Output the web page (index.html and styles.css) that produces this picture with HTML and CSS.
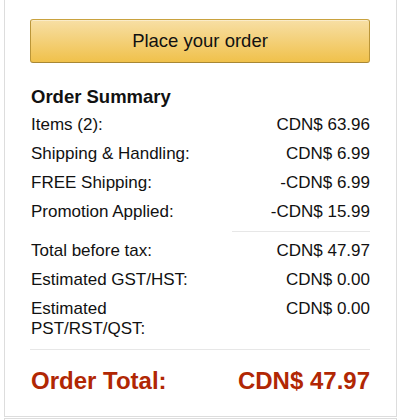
FILE: index.html
```html
<!DOCTYPE html>
<html>
<head>
<meta charset="utf-8">
<link rel="stylesheet" href="styles.css">
</head>
<body>
<div class="group">
  <div class="card">
    <button class="place-btn">Place your order</button>
    <h3 class="summary-title">Order Summary</h3>
    <div class="rows">
      <div class="label">Items (2):</div><div class="value">CDN$ 63.96</div>
      <div class="label">Shipping &amp; Handling:</div><div class="value">CDN$ 6.99</div>
      <div class="label">FREE Shipping:</div><div class="value">-CDN$ 6.99</div>
      <div class="label">Promotion Applied:</div><div class="value">-CDN$ 15.99</div>
      <div class="spacer"></div><div class="divider-short"></div>
      <div class="label">Total before tax:</div><div class="value">CDN$ 47.97</div>
      <div class="label">Estimated GST/HST:</div><div class="value">CDN$ 0.00</div>
      <div class="label">Estimated PST/RST/QST:</div><div class="value">CDN$ 0.00</div>
    </div>
    <div class="divider-full"></div>
    <div class="total-row">
      <span>Order Total:</span>
      <span>CDN$ 47.97</span>
    </div>
  </div>
  <div class="card next"></div>
</div>
</body>
</html>
```

FILE: styles.css
```css
html, body {
  margin: 0;
  padding: 0;
  background: #fff;
  overflow: hidden;
}
body {
  font-family: "Liberation Sans", Arial, sans-serif;
  color: #111;
}
.group {
  margin-left: 4px;
  width: 393px;
}
.card {
  box-sizing: border-box;
  border: 1px solid #ddd;
  border-top: none;
  padding: 19px 26px 21px 25px;
}
.card.next {
  border-top: 1px solid #ddd;
  margin-top: 1px;
  height: 60px;
}
.place-btn {
  display: block;
  width: 100%;
  height: 44px;
  box-sizing: border-box;
  border: 1px solid;
  border-color: #c9a23f #bb9638 #a88734;
  border-radius: 3px;
  background: linear-gradient(to bottom, #f7dfa5, #f0c14b);
  box-shadow: inset 0 1px 0 rgba(255,255,255,0.4);
  font-family: "Liberation Sans", Arial, sans-serif;
  font-size: 18.5px;
  color: #111;
  padding: 0;
  margin: 0;
}
.summary-title {
  margin: 22px 0 6px 1px;
  font-size: 18.5px;
  line-height: 24px;
  font-weight: bold;
}
.rows {
  display: grid;
  grid-template-columns: 191px 1fr;
  column-gap: 10px;
  row-gap: 9px;
  font-size: 17px;
  line-height: 20px;
  padding-left: 1px;
}
.value {
  text-align: right;
}
.spacer {
  height: 1px;
}
.divider-short {
  height: 1px;
  background: #e7e7e7;
  margin: 0 0 -1px 0;
}
.divider-full {
  height: 1px;
  background: #e7e7e7;
  margin: 10px 0 17px 0;
}
.total-row {
  display: flex;
  justify-content: space-between;
  font-size: 24px;
  line-height: 28px;
  font-weight: bold;
  color: #b12704;
  padding-left: 1px;
}
```
